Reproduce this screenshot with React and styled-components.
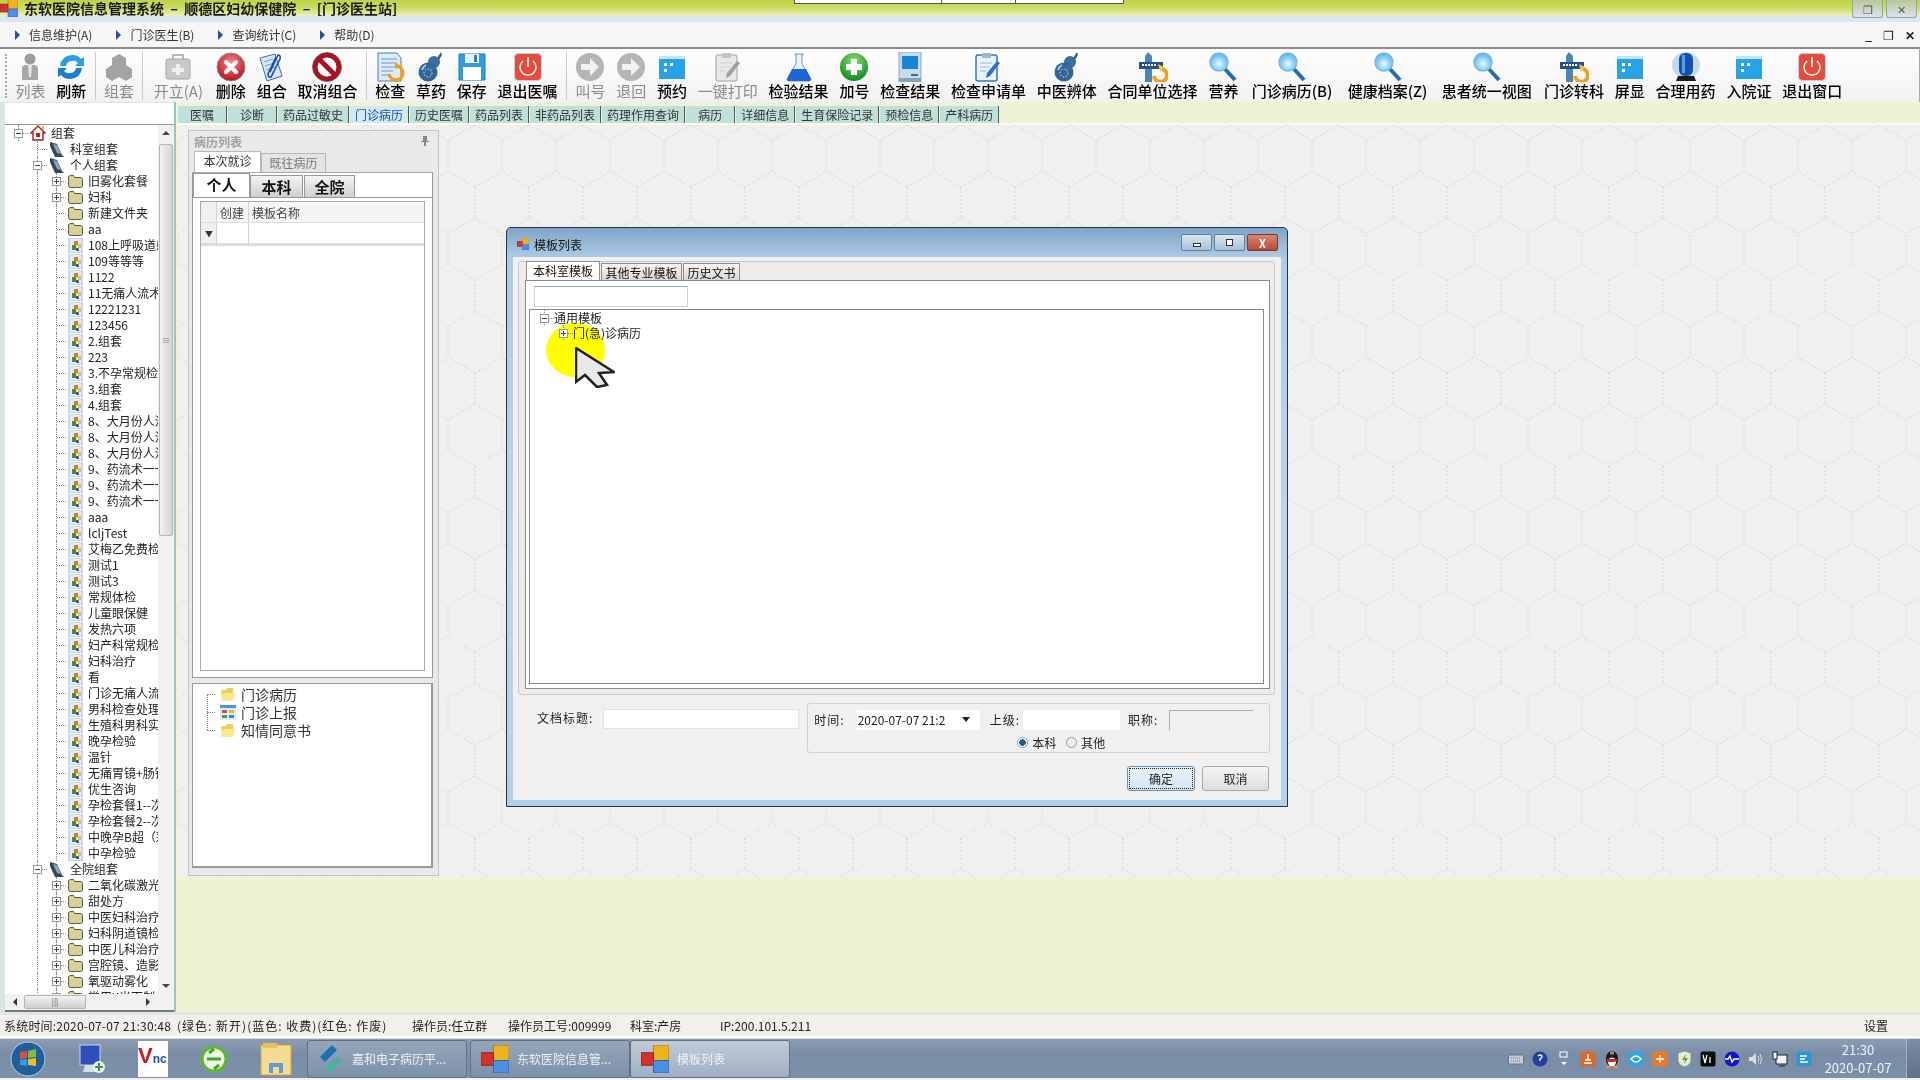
import React from "react";
import styled, { createGlobalStyle } from "styled-components";

const hexTile = encodeURIComponent(
  `<svg xmlns="http://www.w3.org/2000/svg" width="54" height="93"><path d="M27 0L54 15.5V46.5L27 62L0 46.5V15.5ZM27 62V93" fill="none" stroke="#d6d6d6" stroke-dasharray="2 2"/></svg>`
);

const Global = createGlobalStyle`
  html, body { margin: 0; padding: 0; background: #f0f0f0; }
  body { font-family: "Noto Sans CJK SC", "Liberation Sans", sans-serif; font-size: 12px; color: #222; }
  * { box-sizing: border-box; }
`;

const Screen = styled.div`
  position: relative;
  width: 1920px;
  height: 1080px;
  overflow: hidden;
  display: flex;
  flex-direction: column;
`;

/* ---------- title + menu ---------- */
const TitleBar = styled.div`
  height: 22px;
  flex: none;
  display: flex;
  align-items: flex-start;
  justify-content: space-between;
  background: linear-gradient(#bfd24a 0, #cbdc60 8px, #e9efb4 15px, #dbe6f2 17px, #dbe6f2 22px);
`;
const TitleLeft = styled.div`
  display: flex;
  align-items: center;
  gap: 6px;
  height: 16px;
`;
const TitleText = styled.span`
  font-size: 14px;
  font-weight: 700;
  line-height: 16px;
  color: #1a1a1a;
  white-space: pre;
`;
const OtherWindow = styled.div`
  position: absolute;
  left: 794px;
  top: 0;
  width: 330px;
  height: 4px;
  background: linear-gradient(90deg, #fff 146px, #555 146px, #555 147px, #fff 147px, #fff 220px, #555 220px, #555 221px, #fff 221px);
  border: 1px solid #555;
  border-top: 0;
`;
const WinControls = styled.div`
  display: flex;
  gap: 3px;
  padding-right: 3px;
`;
const WinButton = styled.div`
  width: 31px;
  height: 18px;
  border: 1px solid #8fa3b5;
  border-top: 0;
  border-radius: 0 0 3px 3px;
  background: linear-gradient(#b8c79a, #dbe3ea);
  display: flex;
  align-items: center;
  justify-content: center;
  color: #555;
  font-size: 11px;
`;
const MenuBar = styled.div`
  height: 25px;
  flex: none;
  display: flex;
  align-items: center;
  justify-content: space-between;
  background: #f6f6f6;
  padding: 0 5px 0 15px;
`;
const Menus = styled.div`
  display: flex;
  gap: 24px;
`;
const MenuItem = styled.div`
  display: flex;
  align-items: center;
  gap: 9px;
  color: #333;
  font-size: 12px;
  &::before {
    content: "";
    border-left: 5px solid #2a4f9e;
    border-top: 5px solid transparent;
    border-bottom: 5px solid transparent;
  }
`;
const MdiControls = styled.div`
  display: flex;
  gap: 11px;
  align-items: center;
`;

/* ---------- toolbar ---------- */
const Toolbar = styled.div`
  height: 55px;
  flex: none;
  display: flex;
  align-items: flex-start;
  border-top: 2px solid #8a8a8a;
  border-right: 1px solid #aaa;
  background: linear-gradient(#fff, #f1f1f1);
  padding: 3px 0 0 10px;
  position: relative;
  &::before {
    content: "";
    position: absolute;
    left: 5px;
    top: 5px;
    height: 44px;
    border-left: 2px dotted #aaa;
  }
`;
const ToolItem = styled.div`
  display: flex;
  flex-direction: column;
  align-items: center;
  padding: 0 ${(p) => 5.4 + (p.$extra || 0)}px;
  flex: none;
`;
const ToolIcon = styled.div`
  height: 30px;
  display: flex;
  align-items: center;
  justify-content: center;
`;
const ToolLabel = styled.span`
  font-size: 15px;
  line-height: 17px;
  font-weight: ${(p) => (p.$dim ? 400 : 500)};
  color: ${(p) => (p.$dim ? "#8a8a8a" : "#000")};
  white-space: nowrap;
`;
const ToolSep = styled.div`
  width: 1px;
  height: 48px;
  background: #c9c9c9;
  margin: 0 3px;
  flex: none;
`;

/* ---------- body ---------- */
const Body = styled.div`
  height: 913px;
  flex: none;
  display: flex;
  background: #eef3d6;
  border-bottom: 3px solid #e4e4e4;
`;
const LeftColumn = styled.div`
  width: 176px;
  flex: none;
  display: flex;
  flex-direction: column;
  background: #d8e6e3;
  padding-left: 5px;
  border-right: 2px solid #9cc2c2;
`;
const SearchStrip = styled.div`
  height: 22px;
  flex: none;
  background: #fff;
  border-bottom: 1px solid #9a9a9a;
  margin-top: 1px;
`;
const TreeFrame = styled.div`
  flex: 1;
  display: grid;
  grid-template-columns: 1fr 16px;
  grid-template-rows: 1fr 16px;
  background: #fff;
  border-bottom: 2px solid #777;
  min-height: 0;
`;
const TreeScroll = styled.div`
  overflow: hidden;
  padding: 0 0 0 4px;
  min-width: 0;
`;
const Row = styled.div`
  display: flex;
  align-items: center;
  height: ${(p) => p.$h || 16}px;
  white-space: nowrap;
  overflow: hidden;
`;
const Guide = styled.span`
  width: 19px;
  height: 100%;
  flex: none;
  position: relative;
  &::before {
    content: "";
    position: absolute;
    left: 9px;
    top: 0;
    bottom: 0;
    border-left: ${(p) => (p.$none ? "0" : "1px dotted #8a8a8a")};
  }
`;
const Expander = styled(Guide)`
  &::after {
    content: "";
    position: absolute;
    left: 10px;
    right: 0;
    top: 50%;
    border-top: 1px dotted #8a8a8a;
  }
`;
const ExpBox = styled.i`
  position: absolute;
  z-index: 1;
  left: 5px;
  top: 50%;
  margin-top: -4px;
  width: 9px;
  height: 9px;
  background: #fff;
  border: 1px solid #979797;
  &::before {
    content: "";
    position: absolute;
    left: 1px;
    right: 1px;
    top: 3px;
    height: 1px;
    background: #444;
  }
  &::after {
    content: "";
    display: ${(p) => (p.$plus ? "block" : "none")};
    position: absolute;
    left: 3px;
    top: 1px;
    bottom: 1px;
    width: 1px;
    background: #444;
  }
`;
const NodeIcon = styled.span`
  display: flex;
  margin: 0 5px 0 2px;
  flex: none;
`;
const NodeText = styled.span`
  font-size: 12px;
  line-height: 16px;
  color: #222;
`;

const ScrollV = styled.div`
  background: #f1f1f1;
  display: flex;
  flex-direction: column;
  align-items: center;
  padding-top: 6px;
  position: relative;
`;
const ScrollArrow = styled.div`
  width: 0;
  height: 0;
  flex: none;
  border-left: 4px solid transparent;
  border-right: 4px solid transparent;
  border-bottom: ${(p) => (p.$dir === "up" ? "4px solid #444" : "0")};
  border-top: ${(p) => (p.$dir === "down" ? "4px solid #444" : "0")};
`;
const ThumbV = styled.div`
  width: 14px;
  height: 392px;
  margin-top: 9px;
  border: 1px solid #b5b5b5;
  border-radius: 2px;
  background: linear-gradient(90deg, #f3f3f3, #d3d3d3);
  display: flex;
  align-items: center;
  justify-content: center;
  color: #777;
  font-size: 9px;
  margin-bottom: auto;
`;
const DownSlot = styled.div`
  padding-bottom: 6px;
`;
const ScrollH = styled.div`
  background: #f1f1f1;
  display: flex;
  align-items: center;
  justify-content: space-between;
  padding: 0 8px 0 8px;
`;
const ArrowH = styled.div`
  width: 0;
  height: 0;
  border-top: 4px solid transparent;
  border-bottom: 4px solid transparent;
  border-right: ${(p) => (p.$dir === "left" ? "4px solid #333" : "0")};
  border-left: ${(p) => (p.$dir === "right" ? "4px solid #333" : "0")};
`;
const ThumbH = styled.div`
  width: 62px;
  height: 14px;
  margin: 0 auto 0 7px;
  border: 1px solid #b5b5b5;
  border-radius: 2px;
  background: linear-gradient(#f3f3f3, #cfcfcf);
  text-align: center;
  color: #555;
  font-size: 8px;
  line-height: 12px;
`;
const Corner = styled.div`
  background: #f1f1f1;
`;

/* ---------- main side ---------- */
const Main = styled.div`
  flex: 1;
  display: flex;
  flex-direction: column;
  margin-left: 2px;
  min-width: 0;
`;
const DocTabs = styled.div`
  height: 23px;
  flex: none;
  display: flex;
  align-items: flex-start;
  padding-top: 4px;
  border-bottom: 2px solid #fbfbf0;
`;
const DocTab = styled.div`
  height: 17px;
  line-height: 17px;
  font-size: 12px;
  text-align: center;
  padding: 0 ${(p) => (p.$wide ? 12 : 5)}px;
  margin-right: 1px;
  color: ${(p) => (p.$active ? "#1a4fc0" : "#333")};
  background: ${(p) => (p.$active ? "#d2e9ee" : "#bfe0db")};
  border-right: 1px solid #555;
`;
const HexArea = styled.div`
  height: 752px;
  flex: none;
  padding: 5px 10px;
  background-color: #f0f0f0;
  background-image: url("data:image/svg+xml,${hexTile}");
`;
const CasePanel = styled.div`
  width: 251px;
  height: 746px;
  display: flex;
  flex-direction: column;
  background: #e9e9e9;
  border: 1px solid #c4c4c4;
  padding: 0 5px 7px 3px;
`;
const CaseHead = styled.div`
  height: 20px;
  flex: none;
  display: flex;
  align-items: center;
  justify-content: space-between;
  padding: 0 4px 0 2px;
  color: #a0a0a0;
  font-weight: 700;
  font-size: 12px;
`;
const CaseTabs = styled.div`
  display: flex;
  align-items: flex-end;
  height: 21px;
  padding-left: 2px;
  flex: none;
`;
const SmallTab = styled.div`
  height: ${(p) => (p.$active ? 21 : 19)}px;
  width: ${(p) => p.$w}px;
  text-align: center;
  line-height: 18px;
  font-size: 12px;
  color: ${(p) => (p.$active ? "#333" : "#777")};
  background: ${(p) => (p.$active ? "#fff" : "#e4e4e4")};
  border: 1px solid #b8b8b8;
  border-bottom: 0;
`;
const CaseBox = styled.div`
  height: 506px;
  flex: none;
  background: #fff;
  border: 1px solid #999;
  border-top-color: #aaa;
  display: flex;
  flex-direction: column;
`;
const KindTabs = styled.div`
  display: flex;
  align-items: flex-end;
  height: 24px;
  flex: none;
`;
const KindTab = styled.div`
  height: ${(p) => (p.$active ? 24 : 22)}px;
  width: ${(p) => p.$w}px;
  margin-right: ${(p) => p.$gap || 0}px;
  font-size: 15px;
  font-weight: 700;
  line-height: 21px;
  text-align: center;
  color: #111;
  background: ${(p) => (p.$active ? "#fff" : "linear-gradient(#f4f4f4, #cfcfcf)")};
  border: 1px solid #999;
  border-bottom: 0;
`;
const GridWrap = styled.div`
  flex: 1;
  min-height: 0;
  border-top: 1px solid #999;
  padding: 3px 7px 6px 7px;
`;
const Grid = styled.div`
  height: 100%;
  border: 1px solid #a9a9a9;
`;
const GridRow = styled.div`
  display: grid;
  grid-template-columns: 16px 32px 1fr;
  height: ${(p) => p.$h}px;
  background: ${(p) => p.$bg || "#fff"};
  border-bottom: ${(p) => (p.$thick ? "3px solid #ddd" : "1px solid #ddd")};
`;
const GridCell = styled.div`
  border-right: 1px solid #d4d4d4;
  padding-left: 3px;
  font-size: 12px;
  line-height: 19px;
  color: #444;
  display: flex;
  align-items: center;
`;
const GridHeadLabel = styled(GridCell)`
  border-right: 0;
`;
const RowHead = styled(GridCell)`
  background: #f0f0f0;
  padding-left: 4px;
  font-size: 8px;
  color: #333;
`;
const LowerBox = styled.div`
  flex: 1;
  margin-top: 5px;
  background: #fff;
  border: 1px solid #999;
  border-right-width: 2px;
  border-bottom-width: 2px;
  padding: 1px 0 0 14px;
`;
const LowerList = styled.div`
  position: relative;
  &::before {
    content: "";
    position: absolute;
    left: 0;
    top: 9px;
    height: 36px;
    border-left: 1px dotted #888;
  }
`;
const LowerRow = styled.div`
  display: flex;
  align-items: center;
  height: 18px;
  font-size: 14px;
  color: #333;
  gap: 5px;
  &::before {
    content: "";
    width: 8px;
    border-top: 1px dotted #888;
  }
`;

/* ---------- status + taskbar ---------- */
const StatusBar = styled.div`
  height: 23px;
  flex: none;
  display: flex;
  align-items: center;
  background: #f2efec;
  border-bottom: 2px solid #fff;
  font-size: 12px;
  color: #222;
  position: relative;
`;
const StatusCell = styled.span`
  width: ${(p) => p.$w}px;
  padding-left: ${(p) => p.$pad || 0}px;
  letter-spacing: ${(p) => p.$ls || 0}px;
  flex: none;
  white-space: nowrap;
  overflow: hidden;
`;
const Taskbar = styled.div`
  height: 40px;
  flex: none;
  display: flex;
  align-items: center;
  background: linear-gradient(#8b9db3, #7a8da6 40%, #7d90a9);
  border-top: 1px solid #d7dde5;
  padding-left: 10px;
`;
const QuickIcons = styled.div`
  display: flex;
  align-items: center;
  gap: 31px;
  width: 297px;
  flex: none;
`;
const TaskButton = styled.div`
  width: ${(p) => p.$w}px;
  height: 38px;
  flex: none;
  display: flex;
  align-items: center;
  gap: 8px;
  padding-left: ${(p) => p.$pad || 8}px;
  margin-right: ${(p) => p.$gap || 0}px;
  color: #eef2f7;
  font-size: 12px;
  background: ${(p) =>
    p.$active ? "linear-gradient(#c1cbd8, #9fafc2)" : "linear-gradient(#96a6ba, #7e91a9)"};
  border: 1px solid #5f7087;
  border-radius: 3px;
  white-space: nowrap;
`;
const Tray = styled.div`
  margin-left: auto;
  display: flex;
  align-items: center;
  gap: 8px;
  height: 100%;
`;
const TrayBox = styled.span`
  width: 16px;
  height: 16px;
  flex: none;
  display: flex;
  align-items: center;
  justify-content: center;
`;
const Clock = styled.div`
  width: 76px;
  text-align: center;
  color: #eef2f7;
  font-size: 13px;
  line-height: 18px;
`;
const ShowDesktop = styled.div`
  width: 14px;
  height: 39px;
  margin-left: 2px;
  background: linear-gradient(#7a8da3, #5f7188);
  border-left: 1px solid #a8b4c4;
`;

/* ---------- dialog ---------- */
const Dialog = styled.div`
  position: absolute;
  left: 506px;
  top: 227px;
  width: 782px;
  height: 580px;
  display: flex;
  flex-direction: column;
  border: 1px solid #25343f;
  border-radius: 5px 5px 0 0;
  background: linear-gradient(#7fa5cb, #aecbe5 30px, #bdd6ec 60%, #b4d0ea);
  padding: 0 6px 6px;
`;
const DialogTitle = styled.div`
  height: 29px;
  flex: none;
  display: flex;
  align-items: center;
  padding: 3px 3px 0 4px;
  gap: 5px;
  font-size: 12px;
  color: #111;
`;
const DialogBtns = styled.div`
  margin: -3px 0 0 auto;
  display: flex;
  gap: 2px;
`;
const DialogBtn = styled.div`
  width: 31px;
  height: 17px;
  display: flex;
  align-items: center;
  justify-content: center;
  border: 1px solid ${(p) => (p.$close ? "#7b3a2d" : "#67809a")};
  border-radius: 2px;
  background: ${(p) =>
    p.$close ? "linear-gradient(#d88673, #bb4a36)" : "linear-gradient(#dbe6f1, #a9c0d8)"};
  color: ${(p) => (p.$close ? "#fff" : "#333")};
  font-size: 11px;
  font-weight: 700;
`;
const BtnGlyph = styled.i`
  width: ${(p) => (p.$max ? 7 : 8)}px;
  height: ${(p) => (p.$max ? 7 : 4)}px;
  margin-top: ${(p) => (p.$max ? 0 : 4)}px;
  border: 1px solid #333;
  background: #fff;
`;
const DialogClient = styled.div`
  flex: 1;
  display: flex;
  flex-direction: column;
  position: relative;
  background: #f0f0f0;
  padding: 4px 6px 0 5px;
  min-height: 0;
`;
const TabFrame = styled.div`
  height: 434px;
  flex: none;
  display: flex;
  flex-direction: column;
  background: #ececec;
  border: 1px solid #c8c8c8;
  border-radius: 3px;
  padding: 0 4px 5px 6px;
`;
const DlgTabs = styled.div`
  display: flex;
  align-items: flex-end;
  height: 18px;
  padding-left: 1px;
  flex: none;
`;
const DlgTab = styled.div`
  height: ${(p) => (p.$active ? 19 : 17)}px;
  width: ${(p) => p.$w}px;
  margin-right: 1px;
  text-align: center;
  font-size: 12px;
  line-height: 17px;
  color: #111;
  background: ${(p) => (p.$active ? "#fff" : "linear-gradient(#f6f6f6, #d8d8d8)")};
  border: 1px solid #8f8f8f;
  border-bottom: 0;
`;
const DlgTabBody = styled.div`
  flex: 1;
  min-height: 0;
  display: flex;
  flex-direction: column;
  background: #fff;
  border: 1px solid #8a8a8a;
  padding: 5px 5px 4px 3px;
`;
const SearchInput = styled.div`
  width: 154px;
  height: 21px;
  flex: none;
  margin: 0 0 2px 5px;
  border: 1px solid #c5d4e2;
  border-top-color: #8da9c1;
  background: #fff;
`;
const TemplateTree = styled.div`
  flex: 1;
  min-height: 0;
  border: 1px solid #8a8a8a;
  padding: 0 0 0 5px;
`;
const FormRow = styled.div`
  display: flex;
  align-items: flex-start;
  padding: 8px 0 0 19px;
  flex: none;
`;
const FieldLabel = styled.span`
  font-size: 12px;
  line-height: 20px;
  letter-spacing: 1px;
  margin-right: ${(p) => p.$gap || 0}px;
  margin-top: ${(p) => p.$top || 0}px;
  color: #222;
  flex: none;
`;
const TitleInput = styled.div`
  width: 196px;
  height: 20px;
  margin-top: 6px;
  background: #fff;
  border: 1px solid #e2e2e2;
  flex: none;
`;
const GroupBox = styled.div`
  width: 463px;
  height: 50px;
  margin-left: 8px;
  flex: none;
  border: 1px solid #cfcfcf;
  border-radius: 3px;
  padding: 5px 0 0 6px;
  position: relative;
`;
const GroupRow = styled.div`
  display: flex;
  align-items: center;
  height: 21px;
`;
const Field = styled.div`
  width: ${(p) => p.$w}px;
  height: 20px;
  flex: none;
  margin-right: ${(p) => p.$gap || 0}px;
  background: ${(p) => (p.$off ? "#f0f0f0" : "#fff")};
  border-top: ${(p) => (p.$off ? "1px solid #aaa" : "0")};
  border-left: ${(p) => (p.$off ? "1px solid #aaa" : "0")};
  display: flex;
  align-items: center;
  justify-content: space-between;
  padding: 0 10px 0 1px;
  font-size: 12px;
  color: #222;
  white-space: nowrap;
`;
const DropMark = styled.i`
  border-top: 5px solid #222;
  border-left: 4px solid transparent;
  border-right: 4px solid transparent;
`;
const RadioRow = styled.div`
  position: absolute;
  left: 208px;
  bottom: 0;
  display: flex;
  align-items: center;
  background: #f0f0f0;
  padding: 0 6px 0 1px;
  height: 20px;
  font-size: 12px;
  gap: 4px;
`;
const Radio = styled.i`
  width: 11px;
  height: 11px;
  border-radius: 50%;
  border: 1px solid #8b9aa8;
  margin-left: ${(p) => p.$gap || 0}px;
  background: ${(p) =>
    p.$on ? "radial-gradient(circle, #1c5a94 0, #1c5a94 3px, #fff 3.5px)" : "#eee"};
`;
const ButtonRow = styled.div`
  display: flex;
  justify-content: flex-end;
  gap: 7px;
  margin-top: 13px;
  padding-right: 6px;
`;
const DlgButton = styled.div`
  width: ${(p) => p.$w}px;
  height: 25px;
  display: flex;
  align-items: center;
  justify-content: center;
  font-size: 12px;
  color: #222;
  border: 1px solid ${(p) => (p.$default ? "#6f8fb0" : "#a9a9a9")};
  border-radius: 3px;
  background: ${(p) => (p.$default ? "linear-gradient(#e9f3fb, #d5e5f3)" : "linear-gradient(#f5f5f5, #dedede)")};
  outline: ${(p) => (p.$default ? "1px dotted #222" : "0")};
  outline-offset: -3px;
`;
const Highlight = styled.div`
  position: absolute;
  left: 33px;
  top: 66px;
  width: 59px;
  height: 54px;
  border-radius: 50%;
  background: #ffff00;
  mix-blend-mode: multiply;
`;
const Pointer = styled.svg`
  position: absolute;
  left: 62px;
  top: 90px;
`;

/* ---------- drawings ---------- */
const Svg = ({ w = 30, h = 30, vb = "0 0 30 30", children }) => (
  <svg width={w} height={h} viewBox={vb}>
    {children}
  </svg>
);

const Person = () => (
  <Svg>
    <circle cx="15" cy="7" r="5.5" fill="#9c9c9c" />
    <path d="M7 28V17q0-4 4-4h8q4 0 4 4v11z" fill="#a8a8a8" />
    <path d="M13 13h4l-1 12h-2z" fill="#e6e6e6" />
  </Svg>
);
const Refresh = () => (
  <Svg>
    <path d="M4 14Q5 4 16 3q6 0 9 4l3-2v9h-9l3-3q-3-3-6-2-5 0-6 5z" fill="#2c9fe0" />
    <path d="M26 16q-1 10-12 11-6 0-9-4l-3 2v-9h9l-3 3q3 3 6 2 5 0 6-5z" fill="#1b7fcf" />
  </Svg>
);
const Cubes = () => (
  <Svg>
    <path d="M15 2l7 4v8l-7 4-7-4V6zM8 13l7 4v8l-7 4-6-4v-8zM22 13l6 4v8l-6 4-7-4v-8z" fill="#a3a3a3" />
  </Svg>
);
const Case = () => (
  <Svg>
    <path d="M10 7V3h10v4" fill="none" stroke="#b8b8b8" strokeWidth="2" />
    <rect x="3" y="7" width="24" height="20" rx="2" fill="#c9c9c9" stroke="#a5a5a5" />
    <path d="M13 12h4v4h4v4h-4v3h-4v-3H9v-4h4z" fill="#efefef" />
  </Svg>
);
const DeleteIcon = () => (
  <Svg>
    <defs>
      <radialGradient id="redBall" cx="50%" cy="35%" r="65%">
        <stop offset="0" stopColor="#f58a8a" />
        <stop offset="1" stopColor="#b80f1c" />
      </radialGradient>
    </defs>
    <circle cx="15" cy="15" r="14" fill="url(#redBall)" stroke="#8f8f8f" />
    <path d="M10 10l10 10M20 10L10 20" stroke="#fff" strokeWidth="4" strokeLinecap="round" />
  </Svg>
);
const Paper = () => (
  <Svg>
    <path d="M3 6l15-4 7 22-15 5z" fill="#d6e6f8" stroke="#3a6cb5" />
    <path d="M7 10l9-3M8 14l9-3M9 18l9-3" stroke="#7aa0d0" />
    <path d="M19 5l-8 17q0 4 3 3l9-18q1-4-2-4l-8 17" fill="none" stroke="#1f4fa3" strokeWidth="1.6" />
  </Svg>
);
const NoEntry = () => (
  <Svg>
    <circle cx="15" cy="15" r="12" fill="none" stroke="#a8141f" strokeWidth="5" />
    <path d="M7 7l16 16" stroke="#a8141f" strokeWidth="5" />
    <circle cx="15" cy="15" r="14.4" fill="none" stroke="#5b5b5b" strokeWidth=".8" />
  </Svg>
);
const CheckDoc = () => (
  <Svg>
    <path d="M3 1h19l4 5v23H3z" fill="#dcebf9" stroke="#4a7db8" />
    <path d="M6 7h16M6 11h16M6 15h16M6 19h12M6 23h10" stroke="#6e9ccf" />
    <path d="M21 14a7 7 0 1 1-7 8" fill="none" stroke="#f0a020" strokeWidth="3.4" />
    <path d="M20 10l5 4-5 3z" fill="#f0a020" />
  </Svg>
);
const Gourd = () => (
  <Svg>
    <path d="M25 0l-4 6 2 2 3-5z" fill="#3b6f52" />
    <circle cx="18" cy="10" r="6" fill="#3a6f9f" />
    <circle cx="12" cy="20" r="9.5" fill="#2f6594" />
    <path d="M15 13l5 3-8 6z" fill="#3a6f9f" />
    <path d="M6 18q1-3 4-5" stroke="#a6cbe6" strokeWidth="2" fill="none" />
    <circle cx="12" cy="21" r="4" fill="none" stroke="#dcecf7" strokeDasharray="1.5 1.5" />
  </Svg>
);
const Floppy = () => (
  <Svg>
    <path d="M2 2h26v26H2z" fill="#2f9ee0" stroke="#1e78b8" />
    <rect x="8" y="2" width="14" height="9" fill="#e8f1f8" />
    <rect x="17" y="3" width="3" height="7" fill="#2f7fb8" />
    <rect x="6" y="15" width="18" height="13" fill="#fff" />
  </Svg>
);
const Power = () => (
  <Svg>
    <rect x="1.5" y="1.5" width="27" height="27" rx="4" fill="#ea4a3c" stroke="#a7dbe2" />
    <path d="M10 9a8 8 0 1 0 10 0" fill="none" stroke="#fff" strokeWidth="1.6" />
    <path d="M15 5v10" stroke="#fff" strokeWidth="1.6" />
  </Svg>
);
const ArrowBall = () => (
  <Svg>
    <circle cx="15" cy="15" r="14" fill="#b5b5b5" />
    <path d="M6 12h9V6l9 9-9 9v-6H6z" fill="#f2f2f2" />
  </Svg>
);
const WinBlue = () => (
  <Svg>
    <rect x="2" y="4" width="26" height="23" fill="#29a3e8" />
    <rect x="2" y="4" width="26" height="3" fill="#bfe6fa" />
    <path d="M7 11h3v3H7zM13 11h3v3h-3zM7 17h3v3H7z" fill="#fff" />
  </Svg>
);
const Clip = ({ tone }) => {
  const blue = tone === "blue";
  return (
    <Svg>
      <rect x="3" y="3" width="21" height="26" rx="2" fill={blue ? "#eaf3fb" : "#e8e8e8"} stroke={blue ? "#3579b8" : "#bcbcbc"} strokeWidth="1.5" />
      <rect x="9" y="1" width="9" height="5" fill={blue ? "#9db7d2" : "#c4c4c4"} />
      <path d="M7 11h12M7 15h10M7 19h6" stroke={blue ? "#9db7d2" : "#cfcfcf"} />
      <path d="M27 11l-10 13-4 2 1-5 10-12z" fill={blue ? "#2f6fd0" : "#9f9f9f"} />
    </Svg>
  );
};
const Flask = () => (
  <Svg>
    <path d="M11 2h8v1h-1v9l9 15q0 2-2 2H5q-2 0-2-2l9-15V3h-1z" fill="#e8f2fb" stroke="#7a93ad" />
    <path d="M8 17h14l5 10q0 2-2 2H5q-2 0-2-2z" fill="#1a66d8" />
  </Svg>
);
const PlusBall = () => (
  <Svg>
    <defs>
      <radialGradient id="greenBall" cx="50%" cy="30%" r="70%">
        <stop offset="0" stopColor="#8be070" />
        <stop offset="1" stopColor="#0d8a1e" />
      </radialGradient>
    </defs>
    <circle cx="15" cy="15" r="14" fill="url(#greenBall)" />
    <path d="M12 7h6v5h5v6h-5v5h-6v-5H7v-6h5z" fill="#fff" />
  </Svg>
);
const MacBox = () => (
  <Svg>
    <rect x="4" y="0" width="22" height="30" fill="#c8dbe8" stroke="#8fa9bd" />
    <rect x="7" y="4" width="16" height="13" fill="#1586d8" />
    <rect x="16" y="22" width="7" height="2" fill="#4c6a80" />
    <rect x="4" y="26" width="22" height="4" fill="#86a3b8" />
  </Svg>
);
const Signpost = () => (
  <Svg>
    <path d="M10 0l4 4v26H7V4z" fill="#4b87b5" />
    <rect x="1" y="10" width="24" height="7" fill="#25508a" />
    <path d="M4 13h14" stroke="#fff" strokeDasharray="2 1" strokeWidth="2" />
    <path d="M24 17a6.5 6.5 0 1 1-8 7" fill="none" stroke="#f0a020" strokeWidth="4" />
    <path d="M20 12l6 3-4 5z" fill="#f6c24a" />
  </Svg>
);
const Lens = () => (
  <Svg>
    <defs>
      <radialGradient id="lensFill" cx="50%" cy="60%" r="60%">
        <stop offset="0" stopColor="#eaf8ff" />
        <stop offset="1" stopColor="#49b4f0" />
      </radialGradient>
    </defs>
    <path d="M17 17l10 11" stroke="#2a6da8" strokeWidth="4" />
    <circle cx="11" cy="10" r="9" fill="url(#lensFill)" stroke="#7db9de" strokeWidth="1.5" />
  </Svg>
);
const Beacon = () => (
  <Svg>
    <ellipse cx="15" cy="13" rx="14" ry="13" fill="#9fc5dd" opacity=".6" />
    <rect x="8" y="1" width="14" height="23" rx="6" fill="#1353ad" />
    <rect x="11" y="3" width="3" height="18" fill="#5f9be0" />
    <path d="M7 24h16l2 5H5z" fill="#1a1a1a" />
  </Svg>
);

const AppMark = ({ size = 18 }) => (
  <Svg w={size} h={size} vb="0 0 18 18">
    <rect x="8" y="0" width="10" height="10" fill="#eeb21c" stroke="#a97d10" strokeWidth=".6" />
    <rect x="0" y="5" width="8" height="8" fill="#d2342c" stroke="#8c1f1a" strokeWidth=".6" />
    <rect x="8" y="10" width="10" height="8" fill="#4e8fe6" stroke="#2b62ad" strokeWidth=".6" />
  </Svg>
);
const House = () => (
  <Svg w={16} h={16} vb="0 0 16 16">
    <path d="M8 1L1 8h2v7h10V8h2z" fill="#fff" stroke="#a81c1c" strokeWidth="1.4" />
    <rect x="6" y="8" width="4" height="4" fill="#c41a1a" />
    <rect x="12" y="1" width="2" height="4" fill="#e2b440" />
  </Svg>
);
const Books = () => (
  <Svg w={16} h={16} vb="0 0 16 16">
    <path d="M1 1l7 2 5 11 2 2H6L1 5z" fill="#33485c" />
    <path d="M4 3l4 1 4 9-4-1z" fill="#8ea4b7" />
  </Svg>
);
const Folder = () => (
  <Svg w={15} h={13} vb="0 0 15 13">
    <path d="M.5 2.5q0-2 2-2h3l1 2h6q2 0 2 2v6q0 2-2 2h-10q-2 0-2-2z" fill="#d8d09a" stroke="#5f5a35" />
  </Svg>
);
const DocIcon = () => (
  <Svg w={15} h={15} vb="0 0 15 15">
    <rect x="1" y="0" width="13" height="15" fill="#e6ecf8" stroke="#a6b6da" />
    <rect x="6" y="3" width="4" height="4" fill="#d9762a" />
    <rect x="10" y="6" width="3" height="4" fill="#e9c22e" />
    <rect x="4" y="7" width="4" height="5" fill="#3f8f3a" />
    <rect x="8" y="10" width="3" height="3" fill="#3a62b8" />
  </Svg>
);
const YellowFolder = () => (
  <Svg w={16} h={15} vb="0 0 16 15">
    <path d="M1 3h5l1-2h6v12H2z" fill="#f0cf58" />
    <path d="M3 6h12l-2 8H1z" fill="#fbe78e" />
  </Svg>
);
const Calendar = () => (
  <Svg w={16} h={15} vb="0 0 16 15">
    <rect x="0" y="0" width="16" height="15" fill="#d8ecfa" />
    <rect x="0" y="0" width="16" height="3" fill="#3f9ae0" />
    <path d="M2 5h5v3H2z" fill="#d9502f" />
    <path d="M9 5h5v3H9z" fill="#e9b92e" />
    <path d="M2 10h5v3H2z" fill="#4e9f3d" />
    <path d="M9 10h5v3H9z" fill="#3f80d8" />
  </Svg>
);
const Orb = () => (
  <Svg w={36} h={36} vb="0 0 36 36">
    <circle cx="18" cy="18" r="17" fill="#1f5f9e" stroke="#b9d2e8" />
    <path d="M10 11l7-1v7l-7 1z" fill="#e5512f" />
    <path d="M18 10l8-2v8l-8 1z" fill="#7fbf3c" />
    <path d="M10 19l7-1v7l-7-1z" fill="#2f9fe0" />
    <path d="M18 18l8-1v8l-8-1z" fill="#f2bd2a" />
  </Svg>
);
const MonitorQuick = () => (
  <Svg w={30} h={32} vb="0 0 30 32">
    <rect x="3" y="2" width="20" height="20" fill="#2c4fb8" stroke="#c8d4e8" />
    <path d="M8 22h10l2 7H6z" fill="#d9dee5" />
    <circle cx="22" cy="24" r="6" fill="#f0f0f0" />
    <path d="M18 24h8M22 20v8" stroke="#2f9f4a" strokeWidth="2" />
  </Svg>
);
const VncTile = styled.div`
  width: 30px;
  height: 36px;
  background: #fff;
  display: flex;
  align-items: baseline;
  color: #d0171f;
  font-family: "Liberation Sans", sans-serif;
  font-size: 22px;
  font-weight: 700;
  line-height: 30px;
  overflow: hidden;
`;
const VncSmall = styled.span`
  font-size: 12px;
  color: #1c4fb0;
  line-height: 12px;
`;
const GreenE = () => (
  <Svg w={30} h={34} vb="0 0 30 34">
    <circle cx="15" cy="17" r="12" fill="#f2f7ea" stroke="#5cb82e" strokeWidth="3" />
    <path d="M8 17h14M10 11l5-4M20 23l-5 4" stroke="#3ea81f" strokeWidth="3" />
  </Svg>
);
const Explorer = () => (
  <Svg w={32} h={34} vb="0 0 32 34">
    <rect x="1" y="3" width="30" height="30" fill="#f5dc90" stroke="#c9a548" />
    <rect x="3" y="1" width="14" height="5" fill="#e7c25a" />
    <rect x="9" y="21" width="14" height="10" fill="#5d9fd4" />
    <rect x="13" y="25" width="6" height="6" fill="#f5dc90" />
  </Svg>
);
const JiaheMark = () => (
  <Svg w={26} h={30} vb="0 0 26 30">
    <path d="M14 1L2 13l5 5 12-12z" fill="#1f6fb8" />
    <path d="M12 29l12-12-5-5L7 24z" fill="#4fae9c" />
  </Svg>
);

const RoundTray = ({ color, txt }) => (
  <Svg w={16} h={16} vb="0 0 16 16">
    <circle cx="8" cy="8" r="7.5" fill={color} />
    {txt && <path d={txt} stroke="#fff" fill="none" strokeWidth="1.4" />}
  </Svg>
);
const SquareTray = ({ color, txt }) => (
  <Svg w={16} h={16} vb="0 0 16 16">
    <rect x=".5" y=".5" width="15" height="15" rx="2" fill={color} />
    {txt && <path d={txt} stroke="#fff" fill="none" strokeWidth="1.3" />}
  </Svg>
);
const Penguin = () => (
  <Svg w={16} h={18} vb="0 0 16 18">
    <ellipse cx="8" cy="9" rx="6" ry="8" fill="#1a1a1a" />
    <ellipse cx="8" cy="12" rx="4" ry="4.5" fill="#fff" />
    <path d="M3 9h10v2l-3 1H3z" fill="#d8242a" />
    <path d="M6 1.5h4v3H6z" fill="#fff" opacity=".5" />
    <path d="M3 16h4l-1 2H2zM9 16h4l1 2h-4z" fill="#f0a020" />
  </Svg>
);

const tools = [
  { label: "列表", icon: <Person />, dim: true },
  { label: "刷新", icon: <Refresh /> },
  "sep",
  { label: "组套", icon: <Cubes />, dim: true },
  "sep",
  { label: "开立(A)", icon: <Case />, dim: true, extra: 2 },
  { label: "删除", icon: <DeleteIcon /> },
  { label: "组合", icon: <Paper /> },
  { label: "取消组合", icon: <NoEntry /> },
  "sep",
  { label: "检查", icon: <CheckDoc /> },
  { label: "草药", icon: <Gourd /> },
  { label: "保存", icon: <Floppy /> },
  { label: "退出医嘱", icon: <Power /> },
  "sep",
  { label: "叫号", icon: <ArrowBall />, dim: true },
  { label: "退回", icon: <ArrowBall />, dim: true },
  { label: "预约", icon: <WinBlue /> },
  { label: "一键打印", icon: <Clip />, dim: true },
  { label: "检验结果", icon: <Flask /> },
  { label: "加号", icon: <PlusBall /> },
  { label: "检查结果", icon: <MacBox /> },
  { label: "检查申请单", icon: <Clip tone="blue" /> },
  { label: "中医辨体", icon: <Gourd /> },
  { label: "合同单位选择", icon: <Signpost /> },
  { label: "营养", icon: <Lens /> },
  { label: "门诊病历(B)", icon: <Lens />, extra: 2.5 },
  { label: "健康档案(Z)", icon: <Lens />, extra: 2 },
  { label: "患者统一视图", icon: <Lens />, extra: 1.5 },
  { label: "门诊转科", icon: <Signpost /> },
  { label: "屏显", icon: <WinBlue /> },
  { label: "合理用药", icon: <Beacon /> },
  { label: "入院证", icon: <WinBlue /> },
  { label: "退出窗口", icon: <Power /> },
];

const docTabs = [
  { t: "医嘱", wide: true },
  { t: "诊断", wide: true },
  { t: "药品过敏史" },
  { t: "门诊病历", active: true },
  { t: "历史医嘱" },
  { t: "药品列表" },
  { t: "非药品列表" },
  { t: "药理作用查询" },
  { t: "病历", wide: true },
  { t: "详细信息" },
  { t: "生育保险记录" },
  { t: "预检信息" },
  { t: "产科病历" },
];

const personalDocs = [
  "108上呼吸道感染", "109等等等", "1122", "11无痛人流术后", "12221231", "123456", "2.组套", "223",
  "3.不孕常规检查", "3.组套", "4.组套", "8、大月份人流术", "8、大月份人流术", "8、大月份人流术",
  "9、药流术一一", "9、药流术一一", "9、药流术一一", "aaa", "lcljTest", "艾梅乙免费检查", "测试1", "测试3",
  "常规体检", "儿童眼保健", "发热六项", "妇产科常规检查", "妇科治疗", "看", "门诊无痛人流术", "男科检查处理",
  "生殖科男科实验", "晚孕检验", "温针", "无痛胃镜+肠镜", "优生咨询", "孕检套餐1--次", "孕检套餐2--次",
  "中晚孕B超（彩", "中孕检验",
];
const hospitalFolders = [
  "二氧化碳激光治", "甜处方", "中医妇科治疗", "妇科阴道镜检查", "中医儿科治疗", "宫腔镜、造影", "氧驱动雾化", "常用X光下制",
];

const Branch = ({ exp }) => (
  <Expander>{exp && <ExpBox $plus={exp === "plus"} />}</Expander>
);

const Node2 = ({ exp, icon, text }) => (
  <Row>
    <Guide $none />
    <Guide />
    <Branch exp={exp} />
    <NodeIcon>{icon}</NodeIcon>
    <NodeText>{text}</NodeText>
  </Row>
);

const Node1 = ({ exp, text }) => (
  <Row>
    <Guide $none />
    <Branch exp={exp} />
    <NodeIcon><Books /></NodeIcon>
    <NodeText>{text}</NodeText>
  </Row>
);

export default function App() {
  return (
    <Screen>
      <Global />
      <TitleBar>
        <TitleLeft>
          <AppMark />
          <TitleText>东软医院信息管理系统  –  顺德区妇幼保健院  –  [门诊医生站]</TitleText>
        </TitleLeft>
        <WinControls>
          <WinButton>❐</WinButton>
          <WinButton>✕</WinButton>
        </WinControls>
      </TitleBar>
      <OtherWindow />
      <MenuBar>
        <Menus>
          <MenuItem>信息维护(A)</MenuItem>
          <MenuItem>门诊医生(B)</MenuItem>
          <MenuItem>查询统计(C)</MenuItem>
          <MenuItem>帮助(D)</MenuItem>
        </Menus>
        <MdiControls>
          <b>_</b>
          <span>❐</span>
          <b>✕</b>
        </MdiControls>
      </MenuBar>

      <Toolbar>
        {tools.map((tool, i) =>
          tool === "sep" ? (
            <ToolSep key={i} />
          ) : (
            <ToolItem key={i} $extra={tool.extra}>
              <ToolIcon>{tool.icon}</ToolIcon>
              <ToolLabel $dim={tool.dim}>{tool.label}</ToolLabel>
            </ToolItem>
          )
        )}
      </Toolbar>

      <Body>
        <LeftColumn>
          <SearchStrip />
          <TreeFrame>
            <TreeScroll>
              <Row>
                <Branch exp="minus" />
                <NodeIcon><House /></NodeIcon>
                <NodeText>组套</NodeText>
              </Row>
              <Node1 text="科室组套" />
              <Node1 exp="minus" text="个人组套" />
              <Node2 exp="plus" icon={<Folder />} text="旧雾化套餐" />
              <Node2 exp="plus" icon={<Folder />} text="妇科" />
              <Node2 icon={<Folder />} text="新建文件夹" />
              <Node2 icon={<Folder />} text="aa" />
              {personalDocs.map((d, i) => (
                <Node2 key={i} icon={<DocIcon />} text={d} />
              ))}
              <Node1 exp="minus" text="全院组套" />
              {hospitalFolders.map((d) => (
                <Node2 key={d} exp="plus" icon={<Folder />} text={d} />
              ))}
            </TreeScroll>
            <ScrollV>
              <ScrollArrow $dir="up" />
              <ThumbV>≡</ThumbV>
              <DownSlot><ScrollArrow $dir="down" /></DownSlot>
            </ScrollV>
            <ScrollH>
              <ArrowH $dir="left" />
              <ThumbH>|||</ThumbH>
              <ArrowH $dir="right" />
            </ScrollH>
            <Corner />
          </TreeFrame>
        </LeftColumn>

        <Main>
          <DocTabs>
            {docTabs.map((tab) => (
              <DocTab key={tab.t} $wide={tab.wide} $active={tab.active}>{tab.t}</DocTab>
            ))}
          </DocTabs>
          <HexArea>
            <CasePanel>
              <CaseHead>
                病历列表
                <svg width="8" height="10" viewBox="0 0 8 10"><path d="M2 0h4v5h2v1H5v4H3V6H0V5h2z" fill="#888" /></svg>
              </CaseHead>
              <CaseTabs>
                <SmallTab $active $w={67}>本次就诊</SmallTab>
                <SmallTab $w={65}>既往病历</SmallTab>
              </CaseTabs>
              <CaseBox>
                <KindTabs>
                  <KindTab $active $w={57}>个人</KindTab>
                  <KindTab $w={53} $gap={1}>本科</KindTab>
                  <KindTab $w={51}>全院</KindTab>
                </KindTabs>
                <GridWrap>
                  <Grid>
                    <GridRow $h={21} $bg="#f5f5f5">
                      <RowHead />
                      <GridCell>创建</GridCell>
                      <GridHeadLabel>模板名称</GridHeadLabel>
                    </GridRow>
                    <GridRow $h={23} $thick>
                      <RowHead>▼</RowHead>
                      <GridCell />
                      <GridHeadLabel />
                    </GridRow>
                  </Grid>
                </GridWrap>
              </CaseBox>
              <LowerBox>
                <LowerList>
                  <LowerRow><YellowFolder />门诊病历</LowerRow>
                  <LowerRow><Calendar />门诊上报</LowerRow>
                  <LowerRow><YellowFolder />知情同意书</LowerRow>
                </LowerList>
              </LowerBox>
            </CasePanel>
          </HexArea>
        </Main>
      </Body>

      <StatusBar>
        <StatusCell $w={177} $pad={4} $ls={0.2}>系统时间:2020-07-07 21:30:48</StatusCell>
        <StatusCell $w={235} $ls={1}>(绿色: 新开)(蓝色: 收费)(红色: 作废)</StatusCell>
        <StatusCell $w={96}>操作员:任立群</StatusCell>
        <StatusCell $w={122}>操作员工号:009999</StatusCell>
        <StatusCell $w={90}>科室:产房</StatusCell>
        <StatusCell $w={1144}>IP:200.101.5.211</StatusCell>
        <StatusCell $w={40}>设置</StatusCell>
      </StatusBar>
      <Taskbar>
        <QuickIcons>
          <Orb />
          <MonitorQuick />
          <VncTile>V<VncSmall>nc</VncSmall></VncTile>
          <GreenE />
          <Explorer />
        </QuickIcons>
        <TaskButton $w={160} $gap={3} $pad={10}><JiaheMark />嘉和电子病历平...</TaskButton>
        <TaskButton $w={160} $pad={10}><AppMark size={28} />东软医院信息管...</TaskButton>
        <TaskButton $w={160} $active $pad={10}><AppMark size={28} />模板列表</TaskButton>
        <Tray>
          <TrayBox>
            <Svg w={16} h={12} vb="0 0 16 12"><rect x=".5" y="2" width="15" height="9" rx="1" fill="#c9ced4" stroke="#6a7480" /><path d="M3 5h10M3 8h10" stroke="#6a7480" strokeDasharray="1 1" /></Svg>
          </TrayBox>
          <TrayBox><RoundTray color="#20409c" txt="M6 5q2-2 4 0 0 2-2 3v2" /></TrayBox>
          <TrayBox>
            <Svg w={12} h={16} vb="0 0 12 16"><rect x="2" y="1" width="7" height="5" fill="none" stroke="#fff" /><path d="M3 11h6l-3 3z" fill="#fff" /></Svg>
          </TrayBox>
          <TrayBox><SquareTray color="#d9682a" txt="M4 12h8M5 9h6M8 3v6" /></TrayBox>
          <TrayBox><Penguin /></TrayBox>
          <TrayBox><SquareTray color="#35a3e0" txt="M3 8q5-6 10 0-5 6-10 0z" /></TrayBox>
          <TrayBox><SquareTray color="#ea7a26" txt="M8 4v8M4 8h8" /></TrayBox>
          <TrayBox>
            <Svg w={15} h={16} vb="0 0 15 16"><path d="M7.5 0l6.5 2v7q0 5-6.5 7Q1 14 1 9V2z" fill="#e6ead8" stroke="#8a9a70" /><path d="M9 3L5 9h3l-1 4 4-6H8z" fill="#5aa02c" /></Svg>
          </TrayBox>
          <TrayBox><SquareTray color="#0a0a0a" txt="M3 4l2 8 2-8M10 6v6" /></TrayBox>
          <TrayBox><RoundTray color="#1414cc" txt="M1 8h3l2-3 2 6 2-3h5" /></TrayBox>
          <TrayBox>
            <Svg w={16} h={16} vb="0 0 16 16"><path d="M1 6h3l4-4v12l-4-4H1z" fill="#d9dde2" /><path d="M10 5q2 3 0 6M12 3q3 5 0 10" stroke="#d9dde2" fill="none" /></Svg>
          </TrayBox>
          <TrayBox>
            <Svg w={16} h={16} vb="0 0 16 16"><rect x="4" y="4" width="11" height="9" fill="#eef0f2" stroke="#222" /><rect x="1" y="1" width="4" height="7" fill="#fff" stroke="#222" /><path d="M7 15h6" stroke="#222" /></Svg>
          </TrayBox>
          <TrayBox><SquareTray color="#2d95d8" txt="M4 5h7M4 8h5M4 11h8" /></TrayBox>
          <Clock>21:30<br />2020-07-07</Clock>
          <ShowDesktop />
        </Tray>
      </Taskbar>

      <Dialog>
        <DialogTitle>
          <AppMark size={12} />
          模板列表
          <DialogBtns>
            <DialogBtn><BtnGlyph /></DialogBtn>
            <DialogBtn><BtnGlyph $max /></DialogBtn>
            <DialogBtn $close>X</DialogBtn>
          </DialogBtns>
        </DialogTitle>
        <DialogClient>
          <TabFrame>
            <DlgTabs>
              <DlgTab $active $w={74}>本科室模板</DlgTab>
              <DlgTab $w={81}>其他专业模板</DlgTab>
              <DlgTab $w={57}>历史文书</DlgTab>
            </DlgTabs>
            <DlgTabBody>
              <SearchInput />
              <TemplateTree>
                <Row $h={15}>
                  <Branch exp="minus" />
                  <NodeText>通用模板</NodeText>
                </Row>
                <Row $h={15}>
                  <Guide $none />
                  <Branch exp="plus" />
                  <NodeText>门(急)诊病历</NodeText>
                </Row>
              </TemplateTree>
            </DlgTabBody>
          </TabFrame>
          <FormRow>
            <FieldLabel $gap={10} $top={5}>文档标题:</FieldLabel>
            <TitleInput />
            <GroupBox>
              <GroupRow>
                <FieldLabel $gap={12}>时间:</FieldLabel>
                <Field $w={123} $gap={10}>2020-07-07 21:2<DropMark /></Field>
                <FieldLabel $gap={3}>上级:</FieldLabel>
                <Field $w={97} $gap={8} />
                <FieldLabel $gap={11}>职称:</FieldLabel>
                <Field $w={84} $off />
              </GroupRow>
              <RadioRow>
                <Radio $on />本科
                <Radio $gap={6} />其他
              </RadioRow>
            </GroupBox>
          </FormRow>
          <ButtonRow>
            <DlgButton $default $w={68}>确定</DlgButton>
            <DlgButton $w={67}>取消</DlgButton>
          </ButtonRow>
          <Highlight />
          <Pointer width="40" height="41" viewBox="0 0 40 41">
            <path d="M1 1V35L10 28L22 40L32 38L24 26L39 25Z" fill="#e8e8e8" stroke="#222" strokeWidth="2.5" strokeLinejoin="miter" />
          </Pointer>
        </DialogClient>
      </Dialog>
    </Screen>
  );
}
